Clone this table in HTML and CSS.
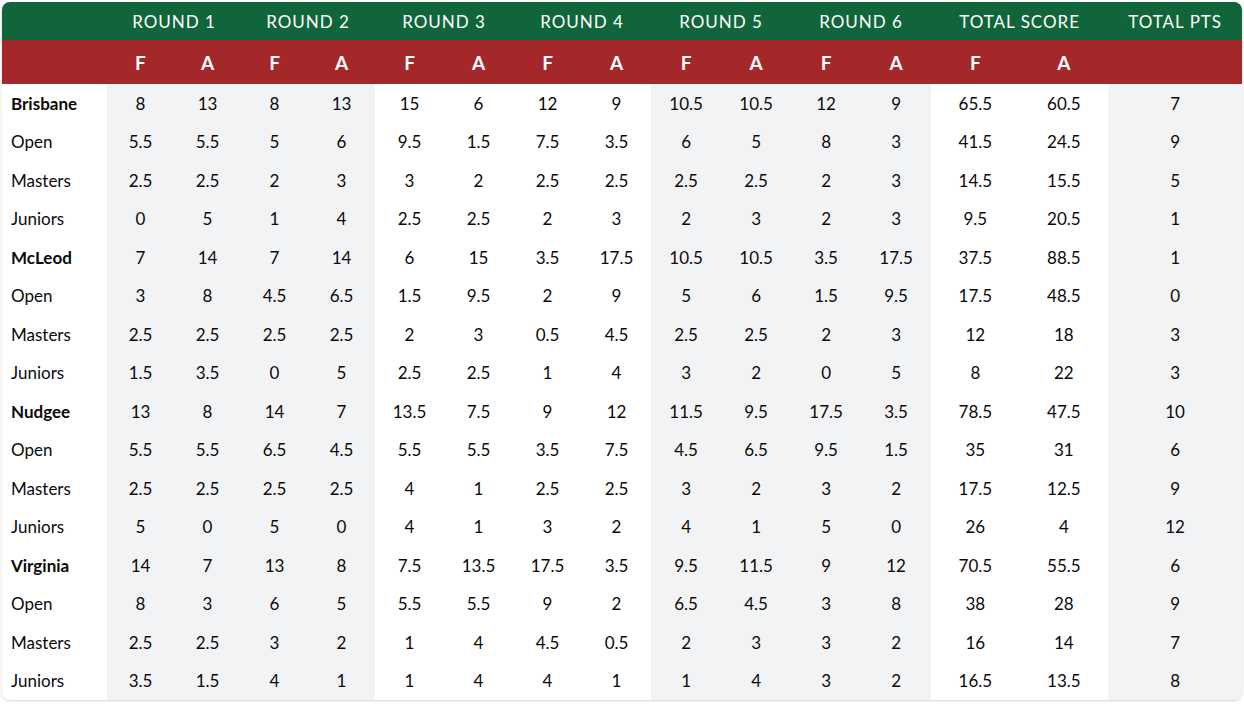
FILE: index.html
```html
<!DOCTYPE html>
<html>
<head>
<meta charset="utf-8">
<link rel="stylesheet" href="styles.css">
</head>
<body>
<div class="card">
<table class="scores">
<colgroup>
<col class="c-name">
<col class="c-r12"><col class="c-r12"><col class="c-r12"><col class="c-r12">
<col class="c-r34"><col class="c-r34"><col class="c-r34"><col class="c-r34">
<col class="c-r56"><col class="c-r56"><col class="c-r56"><col class="c-r56">
<col class="c-tot"><col class="c-tot">
<col class="c-pts">
</colgroup>
<thead>
<tr class="rounds">
<th></th>
<th colspan="2">ROUND 1</th>
<th colspan="2">ROUND 2</th>
<th colspan="2">ROUND 3</th>
<th colspan="2">ROUND 4</th>
<th colspan="2">ROUND 5</th>
<th colspan="2">ROUND 6</th>
<th colspan="2">TOTAL SCORE</th>
<th>TOTAL PTS</th>
</tr>
<tr class="fa">
<th></th>
<th>F</th><th>A</th><th>F</th><th>A</th><th>F</th><th>A</th><th>F</th><th>A</th>
<th>F</th><th>A</th><th>F</th><th>A</th><th>F</th><th>A</th><th></th>
</tr>
</thead>
<tbody>
<tr class="team"><td class="name">Brisbane</td><td class="g">8</td><td class="g">13</td><td class="g">8</td><td class="g">13</td><td>15</td><td>6</td><td>12</td><td>9</td><td class="g">10.5</td><td class="g">10.5</td><td class="g">12</td><td class="g">9</td><td>65.5</td><td>60.5</td><td class="g">7</td></tr>
<tr><td class="name">Open</td><td class="g">5.5</td><td class="g">5.5</td><td class="g">5</td><td class="g">6</td><td>9.5</td><td>1.5</td><td>7.5</td><td>3.5</td><td class="g">6</td><td class="g">5</td><td class="g">8</td><td class="g">3</td><td>41.5</td><td>24.5</td><td class="g">9</td></tr>
<tr><td class="name">Masters</td><td class="g">2.5</td><td class="g">2.5</td><td class="g">2</td><td class="g">3</td><td>3</td><td>2</td><td>2.5</td><td>2.5</td><td class="g">2.5</td><td class="g">2.5</td><td class="g">2</td><td class="g">3</td><td>14.5</td><td>15.5</td><td class="g">5</td></tr>
<tr><td class="name">Juniors</td><td class="g">0</td><td class="g">5</td><td class="g">1</td><td class="g">4</td><td>2.5</td><td>2.5</td><td>2</td><td>3</td><td class="g">2</td><td class="g">3</td><td class="g">2</td><td class="g">3</td><td>9.5</td><td>20.5</td><td class="g">1</td></tr>
<tr class="team"><td class="name">McLeod</td><td class="g">7</td><td class="g">14</td><td class="g">7</td><td class="g">14</td><td>6</td><td>15</td><td>3.5</td><td>17.5</td><td class="g">10.5</td><td class="g">10.5</td><td class="g">3.5</td><td class="g">17.5</td><td>37.5</td><td>88.5</td><td class="g">1</td></tr>
<tr><td class="name">Open</td><td class="g">3</td><td class="g">8</td><td class="g">4.5</td><td class="g">6.5</td><td>1.5</td><td>9.5</td><td>2</td><td>9</td><td class="g">5</td><td class="g">6</td><td class="g">1.5</td><td class="g">9.5</td><td>17.5</td><td>48.5</td><td class="g">0</td></tr>
<tr><td class="name">Masters</td><td class="g">2.5</td><td class="g">2.5</td><td class="g">2.5</td><td class="g">2.5</td><td>2</td><td>3</td><td>0.5</td><td>4.5</td><td class="g">2.5</td><td class="g">2.5</td><td class="g">2</td><td class="g">3</td><td>12</td><td>18</td><td class="g">3</td></tr>
<tr><td class="name">Juniors</td><td class="g">1.5</td><td class="g">3.5</td><td class="g">0</td><td class="g">5</td><td>2.5</td><td>2.5</td><td>1</td><td>4</td><td class="g">3</td><td class="g">2</td><td class="g">0</td><td class="g">5</td><td>8</td><td>22</td><td class="g">3</td></tr>
<tr class="team"><td class="name">Nudgee</td><td class="g">13</td><td class="g">8</td><td class="g">14</td><td class="g">7</td><td>13.5</td><td>7.5</td><td>9</td><td>12</td><td class="g">11.5</td><td class="g">9.5</td><td class="g">17.5</td><td class="g">3.5</td><td>78.5</td><td>47.5</td><td class="g">10</td></tr>
<tr><td class="name">Open</td><td class="g">5.5</td><td class="g">5.5</td><td class="g">6.5</td><td class="g">4.5</td><td>5.5</td><td>5.5</td><td>3.5</td><td>7.5</td><td class="g">4.5</td><td class="g">6.5</td><td class="g">9.5</td><td class="g">1.5</td><td>35</td><td>31</td><td class="g">6</td></tr>
<tr><td class="name">Masters</td><td class="g">2.5</td><td class="g">2.5</td><td class="g">2.5</td><td class="g">2.5</td><td>4</td><td>1</td><td>2.5</td><td>2.5</td><td class="g">3</td><td class="g">2</td><td class="g">3</td><td class="g">2</td><td>17.5</td><td>12.5</td><td class="g">9</td></tr>
<tr><td class="name">Juniors</td><td class="g">5</td><td class="g">0</td><td class="g">5</td><td class="g">0</td><td>4</td><td>1</td><td>3</td><td>2</td><td class="g">4</td><td class="g">1</td><td class="g">5</td><td class="g">0</td><td>26</td><td>4</td><td class="g">12</td></tr>
<tr class="team"><td class="name">Virginia</td><td class="g">14</td><td class="g">7</td><td class="g">13</td><td class="g">8</td><td>7.5</td><td>13.5</td><td>17.5</td><td>3.5</td><td class="g">9.5</td><td class="g">11.5</td><td class="g">9</td><td class="g">12</td><td>70.5</td><td>55.5</td><td class="g">6</td></tr>
<tr><td class="name">Open</td><td class="g">8</td><td class="g">3</td><td class="g">6</td><td class="g">5</td><td>5.5</td><td>5.5</td><td>9</td><td>2</td><td class="g">6.5</td><td class="g">4.5</td><td class="g">3</td><td class="g">8</td><td>38</td><td>28</td><td class="g">9</td></tr>
<tr><td class="name">Masters</td><td class="g">2.5</td><td class="g">2.5</td><td class="g">3</td><td class="g">2</td><td>1</td><td>4</td><td>4.5</td><td>0.5</td><td class="g">2</td><td class="g">3</td><td class="g">3</td><td class="g">2</td><td>16</td><td>14</td><td class="g">7</td></tr>
<tr><td class="name">Juniors</td><td class="g">3.5</td><td class="g">1.5</td><td class="g">4</td><td class="g">1</td><td>1</td><td>4</td><td>4</td><td>1</td><td class="g">1</td><td class="g">4</td><td class="g">3</td><td class="g">2</td><td>16.5</td><td>13.5</td><td class="g">8</td></tr>
</tbody>
</table>
</div>
</body>
</html>
```

FILE: styles.css
```css
html, body {
  margin: 0;
  padding: 0;
  background: #ffffff;
}
body {
  padding: 2px;
  font-family: "Lato", "Liberation Sans", sans-serif;
  color: #0a0a0a;
}
.card {
  width: 1240px;
  border-radius: 8px;
  overflow: hidden;
  background: #ffffff;
  box-shadow: 0 1px 3px rgba(0, 0, 0, 0.18);
}
.scores {
  width: 1240px;
  border-collapse: collapse;
  table-layout: fixed;
}
.c-name { width: 105px; }
.c-r12 { width: 67px; }
.c-r34 { width: 69px; }
.c-r56 { width: 70px; }
.c-tot { width: 88.5px; }
.c-pts { width: 134px; }

.rounds th {
  background: #10663a;
  color: #ffffff;
  height: 38px;
  padding: 0;
  font-weight: 400;
  font-size: 17px;
  letter-spacing: 1px;
  text-align: center;
}
.fa th {
  background: #a4282a;
  color: #ffffff;
  height: 44px;
  padding: 0;
  font-weight: 700;
  font-size: 19px;
  text-align: center;
}
.scores td {
  height: 38.5px;
  padding: 0;
  font-size: 17px;
  text-align: center;
}
.scores td.g {
  background: #f2f3f5;
}
.scores td.name {
  text-align: left;
  padding-left: 9px;
}
.team td.name {
  font-weight: 700;
}
```
